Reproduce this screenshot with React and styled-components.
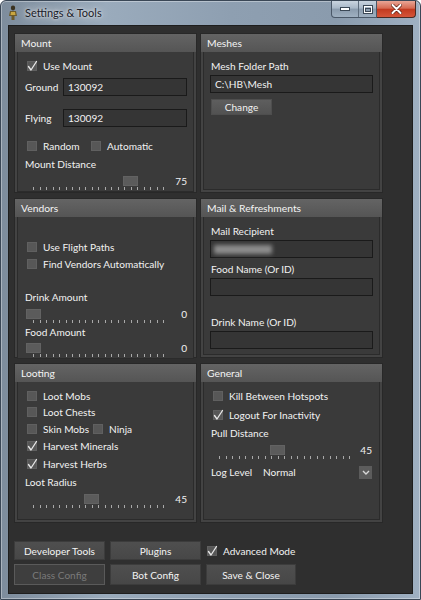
import React from 'react';
import styled, { createGlobalStyle } from 'styled-components';

const Global = createGlobalStyle`
  html, body { margin: 0; padding: 0; background: #ffffff; }
  body { font-family: Lato, "Noto Sans", sans-serif; }
  * { box-sizing: border-box; }
`;

const Window = styled.div`
  width: 421px;
  height: 600px;
  display: flex;
  flex-direction: column;
  background: linear-gradient(90deg, #7d8c9c 0%, #9aabbc 25%, #8e9fb1 55%, #8a9bad 80%, #9fb0c2 100%);
  border: 1px solid #3a4756;
  border-radius: 6px 6px 0 0;
  padding: 0 7px 5px 7px;
  box-shadow: inset 0 0 0 1px rgba(255,255,255,0.35);
`;

const TitleBar = styled.div`
  height: 24px;
  display: flex;
  align-items: flex-start;
`;

const TitleIcon = styled.svg`
  width: 10px;
  height: 16px;
  margin-top: 4px;
  flex: none;
`;

const TitleText = styled.div`
  margin-left: 7px;
  margin-top: 3px;
  font-family: Lato, "Noto Sans", sans-serif;
  font-size: 11px;
  line-height: 18px;
  color: #1b2028;
  text-shadow: 0 0 8px rgba(255,255,255,0.9), 0 0 3px rgba(255,255,255,0.8);
`;

const Caption = styled.div`
  margin-left: auto;
  margin-right: -3px;
  display: flex;
  height: 17px;
`;

const CapGroup = styled.div`
  display: flex;
  border: 1px solid #4a5868;
  border-top: none;
  border-radius: 0 0 0 4px;
  overflow: hidden;
  background: linear-gradient(#c9d4df 0%, #a8b7c7 45%, #8a9bad 50%, #9fb0c1 100%);
`;

const CapBtn = styled.div`
  width: ${p => p.$w}px;
  height: 16px;
  display: flex;
  align-items: center;
  justify-content: center;
  border-left: ${p => (p.$sep ? '1px solid #5d6c7c' : 'none')};
`;

const CloseBtn = styled.div`
  width: 39px;
  height: 17px;
  display: flex;
  align-items: center;
  justify-content: center;
  border: 1px solid #4a2a24;
  border-top: none;
  border-left: none;
  border-radius: 0 0 4px 0;
  background: linear-gradient(#e9a696 0%, #d66a52 45%, #c23a20 52%, #d5553a 100%);
`;

const Client = styled.div`
  flex: 1;
  background: #2f2f2f;
  border: 1px solid #1e1e1e;
  padding: 7px 5px 0 5px;
  display: flex;
  flex-direction: column;
  color: #f2f2f2;
  font-size: 10.1px;
`;

const PanelGrid = styled.div`
  display: grid;
  grid-template-columns: 183px 183px;
  grid-template-rows: 160px 160px 160px;
  column-gap: 3px;
  row-gap: 5px;
`;

const Panel = styled.section`
  display: flex;
  flex-direction: column;
  background: #434343;
  border: 1px solid #282828;
`;

const PanelHeader = styled.div`
  height: 18px;
  line-height: 18px;
  padding-left: 6px;
  background: linear-gradient(#646464, #555555);
  color: #f4f4f4;
  font-size: 10.3px;
`;

const PanelBody = styled.div`
  flex: 1;
  margin: 0 2px 2px 2px;
  border: 1px solid #2b2b2b;
  border-top: none;
  background: #3a3a3a;
  padding: ${p => p.$pt ?? 6}px 6px 0 7px;
  display: flex;
  flex-direction: column;
`;

const Label = styled.div`
  height: 16px;
  line-height: 16px;
  margin-top: ${p => p.$mt ?? 0}px;
  white-space: nowrap;
`;

const CheckLine = styled.div`
  display: flex;
  height: 16px;
  align-items: center;
  margin-top: ${p => p.$mt ?? 0}px;
  margin-left: 2px;
`;

const CheckItem = styled.div`
  display: flex;
  align-items: center;
  width: ${p => (p.$w ? `${p.$w}px` : 'auto')};
  white-space: nowrap;
`;

const Box = styled.span`
  position: relative;
  width: 10px;
  height: 10px;
  background: #575757;
  border: 1px solid #606060;
  margin-right: 6px;
  flex: none;
`;

const Tick = styled.svg`
  position: absolute;
  left: -1px;
  top: -2px;
  width: 11px;
  height: 12px;
  overflow: visible;
`;

const FieldRow = styled.div`
  display: flex;
  align-items: center;
  margin-top: ${p => p.$mt ?? 0}px;
`;

const FieldLabel = styled.div`
  width: 38px;
  flex: none;
`;

const Input = styled.div`
  flex: ${p => (p.$grow ? 1 : 'none')};
  height: ${p => p.$h ?? 18}px;
  margin-top: ${p => p.$mt ?? 0}px;
  margin-left: ${p => p.$ml ?? 0}px;
  border: 1px solid #1a1a1a;
  background: #353535;
  display: flex;
  align-items: center;
  padding-left: 4px;
  color: #f2f2f2;
  white-space: nowrap;
`;

const Redacted = styled.span`
  display: block;
  width: 58px;
  height: 9px;
  background: #8d8d8d;
  filter: blur(2px);
  margin-left: -1px;
`;

const SmallButton = styled.div`
  width: 61px;
  height: 16px;
  margin-top: 6px;
  background: linear-gradient(#5e5e5e, #525252);
  border: 1px solid #4e4e4e;
  display: flex;
  align-items: center;
  justify-content: center;
`;

const SliderWrap = styled.div`
  display: flex;
  height: 16px;
  margin-top: ${p => p.$mt ?? 3}px;
`;

const Track = styled.div`
  position: relative;
  width: 146px;
  height: 16px;
  flex: none;
`;

const Thumb = styled.div`
  position: absolute;
  top: 1px;
  width: 15px;
  height: 10px;
  background: #5b5b5b;
  border: 1px solid #626262;
`;

const Ticks = styled.svg`
  position: absolute;
  left: 0;
  top: 12px;
  width: 146px;
  height: 3px;
`;

const SliderValue = styled.div`
  flex: 1;
  text-align: right;
  line-height: 12px;
  padding-right: ${p => p.$pr ?? 0}px;
`;

const ComboRow = styled.div`
  display: flex;
  align-items: center;
  height: 16px;
  margin-top: 4px;
`;

const ComboLabel = styled.div`
  width: 47px;
  flex: none;
`;

const Combo = styled.div`
  flex: 1;
  display: flex;
  align-items: center;
  justify-content: space-between;
  padding-left: 5px;
  padding-right: 1px;
`;

const ComboArrow = styled.div`
  width: 13px;
  height: 13px;
  background: #5c5c5c;
  display: flex;
  align-items: center;
  justify-content: center;
`;

const ButtonGrid = styled.div`
  display: grid;
  grid-template-columns: 91px 91px 110px;
  grid-template-rows: 19px 21px;
  column-gap: 5px;
  row-gap: 4px;
  margin-top: 18px;
`;

const Button = styled.div`
  display: flex;
  align-items: center;
  justify-content: center;
  background: ${p => (p.$disabled ? '#3e3e3e' : 'linear-gradient(#4f4f4f, #474747)')};
  border: 1px solid ${p => (p.$disabled ? '#5a5a5a' : '#3c3c3c')};
  color: ${p => (p.$disabled ? '#7a7a7a' : '#f4f4f4')};
  width: ${p => (p.$w ? `${p.$w}px` : 'auto')};
  white-space: nowrap;
`;

const AdvancedCheck = styled.div`
  display: flex;
  align-items: center;
  margin-left: 1px;
`;

function CheckMark() {
  return (
    <Tick viewBox="0 0 11 12">
      <path d="M1.5 6.5 L4 10 L9.5 1.5" fill="none" stroke="#e8e8e8" strokeWidth="1.3" strokeLinecap="round" strokeLinejoin="round" />
    </Tick>
  );
}

function Check({ checked, children, w }) {
  return (
    <CheckItem $w={w}>
      <Box>{checked && <CheckMark />}</Box>
      {children}
    </CheckItem>
  );
}

function Slider({ value, max = 100, mt, pr }) {
  const ticks = [];
  for (let i = 0; i <= 20; i++) {
    const x = 8 + (130 * i) / 20;
    ticks.push(<rect key={i} x={Math.round(x)} y="0" width="1" height="3" fill="#a9a9a9" />);
  }
  const left = 8 + (value / max) * 130 - 7.5;
  return (
    <SliderWrap $mt={mt}>
      <Track>
        <Thumb style={{ left: `${left}px` }} />
        <Ticks viewBox="0 0 146 3">{ticks}</Ticks>
      </Track>
      <SliderValue $pr={pr}>{value}</SliderValue>
    </SliderWrap>
  );
}

export default function App() {
  return (
    <>
      <Global />
      <Window>
        <TitleBar>
          <TitleIcon viewBox="0 0 10 16">
            <ellipse cx="5" cy="3" rx="2.2" ry="2.4" fill="#3b3320" />
            <path d="M2 6 L8 6 L9 11 L6.5 11 L6.5 15 L3.5 15 L3.5 11 L1 11 Z" fill="#6d5b2a" />
            <path d="M3 7 L7 7 L7.5 10 L2.5 10 Z" fill="#c9a640" />
          </TitleIcon>
          <TitleText>Settings &amp; Tools</TitleText>
          <Caption>
            <CapGroup>
              <CapBtn $w={26}>
                <svg width="10" height="4" viewBox="0 0 10 4">
                  <rect x="0.5" y="0.5" width="9" height="3" fill="#ffffff" stroke="#3b4856" strokeWidth="1" />
                </svg>
              </CapBtn>
              <CapBtn $w={18} $sep>
                <svg width="10" height="9" viewBox="0 0 10 9">
                  <rect x="0.5" y="0.5" width="9" height="8" fill="none" stroke="#3b4856" strokeWidth="1" />
                  <rect x="1.5" y="1.5" width="7" height="6" fill="none" stroke="#ffffff" strokeWidth="1" />
                  <rect x="2.5" y="3.5" width="5" height="3" fill="none" stroke="#3b4856" strokeWidth="1" />
                </svg>
              </CapBtn>
            </CapGroup>
            <CloseBtn>
              <svg width="11" height="10" viewBox="0 0 11 10">
                <path d="M1.5 1 L9.5 9 M9.5 1 L1.5 9" stroke="#5a1d12" strokeWidth="3.4" strokeLinecap="round" />
                <path d="M1.5 1 L9.5 9 M9.5 1 L1.5 9" stroke="#ffffff" strokeWidth="2" strokeLinecap="round" />
              </svg>
            </CloseBtn>
          </Caption>
        </TitleBar>

        <Client>
          <PanelGrid>
            <Panel>
              <PanelHeader>Mount</PanelHeader>
              <PanelBody>
                <CheckLine><Check checked>Use Mount</Check></CheckLine>
                <FieldRow $mt={4}>
                  <FieldLabel>Ground</FieldLabel>
                  <Input $grow>130092</Input>
                </FieldRow>
                <FieldRow $mt={13}>
                  <FieldLabel>Flying</FieldLabel>
                  <Input $grow>130092</Input>
                </FieldRow>
                <CheckLine $mt={11}>
                  <Check w={64}>Random</Check>
                  <Check>Automatic</Check>
                </CheckLine>
                <Label $mt={2}>Mount Distance</Label>
                <Slider value={75} />
              </PanelBody>
            </Panel>

            <Panel>
              <PanelHeader>Meshes</PanelHeader>
              <PanelBody>
                <Label>Mesh Folder Path</Label>
                <Input $mt={1} $ml={-1}>C:\HB\Mesh</Input>
                <SmallButton>Change</SmallButton>
              </PanelBody>
            </Panel>

            <Panel>
              <PanelHeader>Vendors</PanelHeader>
              <PanelBody $pt={22}>
                <CheckLine><Check>Use Flight Paths</Check></CheckLine>
                <CheckLine $mt={1}><Check>Find Vendors Automatically</Check></CheckLine>
                <Label $mt={17}>Drink Amount</Label>
                <Slider value={0} />
                <Label $mt={0}>Food Amount</Label>
                <Slider value={0} mt={2} />
              </PanelBody>
            </Panel>

            <Panel>
              <PanelHeader>Mail &amp; Refreshments</PanelHeader>
              <PanelBody>
                <Label>Mail Recipient</Label>
                <Input $mt={1} $ml={-1}><Redacted /></Input>
                <Label $mt={3}>Food Name (Or ID)</Label>
                <Input $mt={1} $ml={-1} />
                <Label $mt={18}>Drink Name (Or ID)</Label>
                <Input $mt={1} $ml={-1} />
              </PanelBody>
            </Panel>

            <Panel>
              <PanelHeader>Looting</PanelHeader>
              <PanelBody>
                <CheckLine><Check>Loot Mobs</Check></CheckLine>
                <CheckLine><Check>Loot Chests</Check></CheckLine>
                <CheckLine $mt={1}>
                  <Check w={66}>Skin Mobs</Check>
                  <Check>Ninja</Check>
                </CheckLine>
                <CheckLine $mt={1}><Check checked>Harvest Minerals</Check></CheckLine>
                <CheckLine $mt={2}><Check checked>Harvest Herbs</Check></CheckLine>
                <Label $mt={2}>Loot Radius</Label>
                <Slider value={45} />
              </PanelBody>
            </Panel>

            <Panel>
              <PanelHeader>General</PanelHeader>
              <PanelBody>
                <CheckLine><Check>Kill Between Hotspots</Check></CheckLine>
                <CheckLine $mt={3}><Check checked>Logout For Inactivity</Check></CheckLine>
                <Label $mt={2}>Pull Distance</Label>
                <Slider value={45} pr={1} />
                <ComboRow>
                  <ComboLabel>Log Level</ComboLabel>
                  <Combo>
                    <span>Normal</span>
                    <ComboArrow>
                      <svg width="8" height="5" viewBox="0 0 8 5">
                        <path d="M1 1 L4 4 L7 1" fill="none" stroke="#d8d8d8" strokeWidth="1.4" />
                      </svg>
                    </ComboArrow>
                  </Combo>
                </ComboRow>
              </PanelBody>
            </Panel>
          </PanelGrid>

          <ButtonGrid>
            <Button>Developer Tools</Button>
            <Button>Plugins</Button>
            <AdvancedCheck><Check checked>Advanced Mode</Check></AdvancedCheck>
            <Button $disabled>Class Config</Button>
            <Button>Bot Config</Button>
            <Button $w={90}>Save &amp; Close</Button>
          </ButtonGrid>
        </Client>
      </Window>
    </>
  );
}
